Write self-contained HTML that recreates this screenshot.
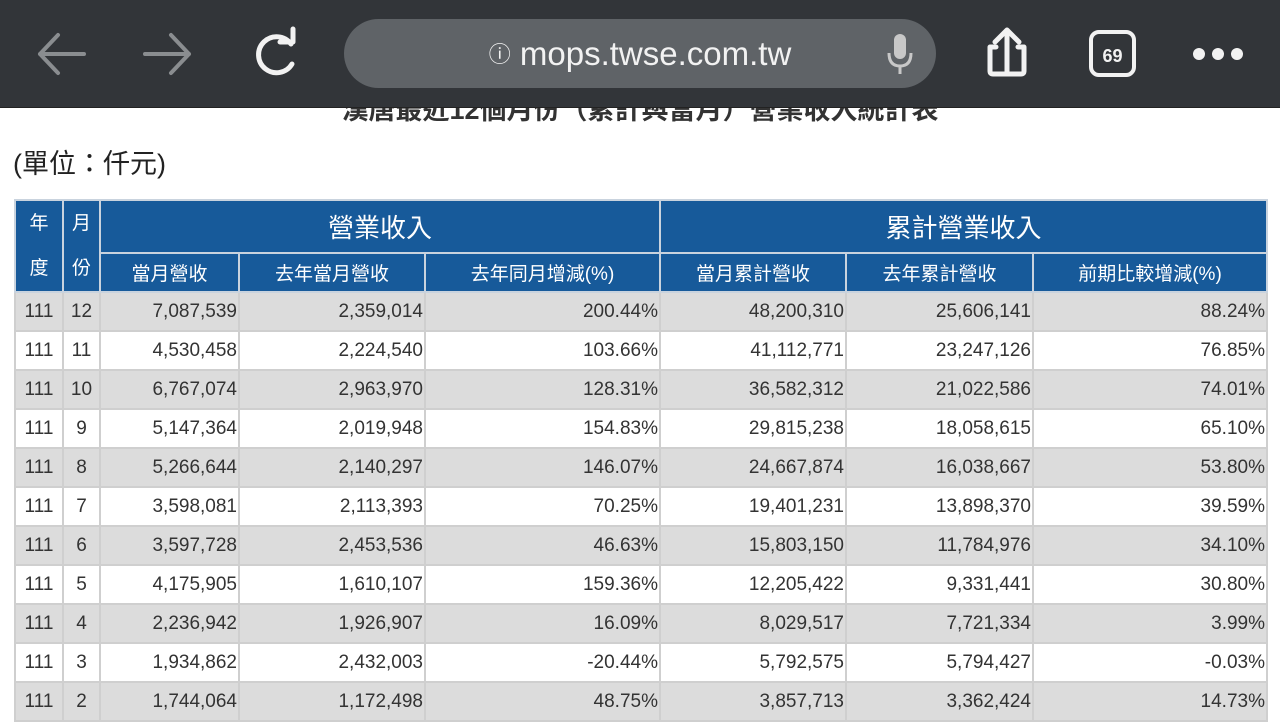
<!DOCTYPE html>
<html><head><meta charset="utf-8"><style>
*{margin:0;padding:0;box-sizing:border-box}
body{width:1280px;height:720px;overflow:hidden;background:#fff;font-family:"Liberation Sans","Noto Sans CJK TC",sans-serif;position:relative}
.bar{position:absolute;left:0;top:0;width:1280px;height:108px;background:#323539;border-bottom:1px solid #222;z-index:5}
.pill{position:absolute;left:344px;top:19px;width:592px;height:69px;border-radius:35px;background:#5f6367}
.url{position:absolute;left:0;width:100%;top:0;line-height:69px;text-align:center;color:#f2f2f2;font-size:33px}
.title{position:absolute;left:0;width:1280px;top:88px;text-align:center;font-size:27px;font-weight:bold;color:#333}
.unit{position:absolute;left:13px;top:142px;font-size:27px;color:#222}
table{position:absolute;left:14px;top:199px;border-collapse:collapse;table-layout:fixed;font-size:19px;color:#333}
td,th{border:2px solid #cfcfcf;overflow:hidden;white-space:nowrap}
th{background:#175a9a;color:#fff;font-weight:normal;border-color:#c9d3de}
th.big{font-size:26px;height:53px}
th.sm{height:39px;font-size:19px}
td{height:39px;text-align:right;padding-right:1px}
td.c{text-align:center;padding:0}
tr.g td{background:#dcdcdc}
</style></head><body>
<div class="bar">
<svg width="1280" height="108" style="position:absolute;left:0;top:0">
<g stroke="#8a8d90" stroke-width="4" fill="none" stroke-linecap="round" stroke-linejoin="round">
<path d="M40 54H84M58 35L40 54L58 73"/>
<path d="M145 54H189M171 35L189 54L171 73"/>
</g>
<g stroke="#f2f2f2" stroke-width="5" fill="none" stroke-linecap="round" stroke-linejoin="round">
<path d="M291 44A18 18 0 1 0 292 64"/><path d="M280 42H293V29"/>
<path d="M1007 32V73M995 42L1007 30L1019 42"/><path d="M996 47H990V71Q990 74 993 74H1021Q1024 74 1024 71V47H1018"/>
<rect x="1091" y="32" width="43" height="43" rx="8" stroke-width="4"/>
</g>
<text x="1112.5" y="62" fill="#f2f2f2" font-size="18" font-weight="bold" text-anchor="middle" font-family="Liberation Sans">69</text>
<g fill="#f2f2f2"><circle cx="1199" cy="54" r="6"/><circle cx="1218" cy="54" r="6"/><circle cx="1237" cy="54" r="6"/></g>
</svg>
<div class="pill"><div class="url"><span style="font-size:22px;vertical-align:3px">ⓘ</span> mops.twse.com.tw</div>
<svg width="30" height="45" style="position:absolute;left:542px;top:13px"><rect x="8" y="2" width="12" height="25" rx="6" fill="#c8c8c8"/><path d="M3 21Q3 34 14 34Q25 34 25 21M14 34V42" stroke="#c8c8c8" stroke-width="3" fill="none"/></svg>
</div>
</div>
<div class="title">漢唐最近12個月份（累計與當月）營業收入統計表</div>
<div class="unit">(單位：仟元)</div>
<table>
<colgroup><col style="width:48px"><col style="width:37px"><col style="width:139px"><col style="width:186px"><col style="width:235px"><col style="width:186px"><col style="width:187px"><col style="width:234px"></colgroup>
<tr><th rowspan="2" style="font-size:19px;line-height:45px">年<br>度</th><th rowspan="2" style="font-size:19px;line-height:45px">月<br>份</th><th colspan="3" class="big">營業收入</th><th colspan="3" class="big">累計營業收入</th></tr>
<tr><th class="sm">當月營收</th><th class="sm">去年當月營收</th><th class="sm">去年同月增減(%)</th><th class="sm">當月累計營收</th><th class="sm">去年累計營收</th><th class="sm">前期比較增減(%)</th></tr>
<tr class="g"><td class="c">111</td><td class="c">12</td><td>7,087,539</td><td>2,359,014</td><td>200.44%</td><td>48,200,310</td><td>25,606,141</td><td>88.24%</td></tr>
<tr><td class="c">111</td><td class="c">11</td><td>4,530,458</td><td>2,224,540</td><td>103.66%</td><td>41,112,771</td><td>23,247,126</td><td>76.85%</td></tr>
<tr class="g"><td class="c">111</td><td class="c">10</td><td>6,767,074</td><td>2,963,970</td><td>128.31%</td><td>36,582,312</td><td>21,022,586</td><td>74.01%</td></tr>
<tr><td class="c">111</td><td class="c">9</td><td>5,147,364</td><td>2,019,948</td><td>154.83%</td><td>29,815,238</td><td>18,058,615</td><td>65.10%</td></tr>
<tr class="g"><td class="c">111</td><td class="c">8</td><td>5,266,644</td><td>2,140,297</td><td>146.07%</td><td>24,667,874</td><td>16,038,667</td><td>53.80%</td></tr>
<tr><td class="c">111</td><td class="c">7</td><td>3,598,081</td><td>2,113,393</td><td>70.25%</td><td>19,401,231</td><td>13,898,370</td><td>39.59%</td></tr>
<tr class="g"><td class="c">111</td><td class="c">6</td><td>3,597,728</td><td>2,453,536</td><td>46.63%</td><td>15,803,150</td><td>11,784,976</td><td>34.10%</td></tr>
<tr><td class="c">111</td><td class="c">5</td><td>4,175,905</td><td>1,610,107</td><td>159.36%</td><td>12,205,422</td><td>9,331,441</td><td>30.80%</td></tr>
<tr class="g"><td class="c">111</td><td class="c">4</td><td>2,236,942</td><td>1,926,907</td><td>16.09%</td><td>8,029,517</td><td>7,721,334</td><td>3.99%</td></tr>
<tr><td class="c">111</td><td class="c">3</td><td>1,934,862</td><td>2,432,003</td><td>-20.44%</td><td>5,792,575</td><td>5,794,427</td><td>-0.03%</td></tr>
<tr class="g"><td class="c">111</td><td class="c">2</td><td>1,744,064</td><td>1,172,498</td><td>48.75%</td><td>3,857,713</td><td>3,362,424</td><td>14.73%</td></tr>
</table>
</body></html>
